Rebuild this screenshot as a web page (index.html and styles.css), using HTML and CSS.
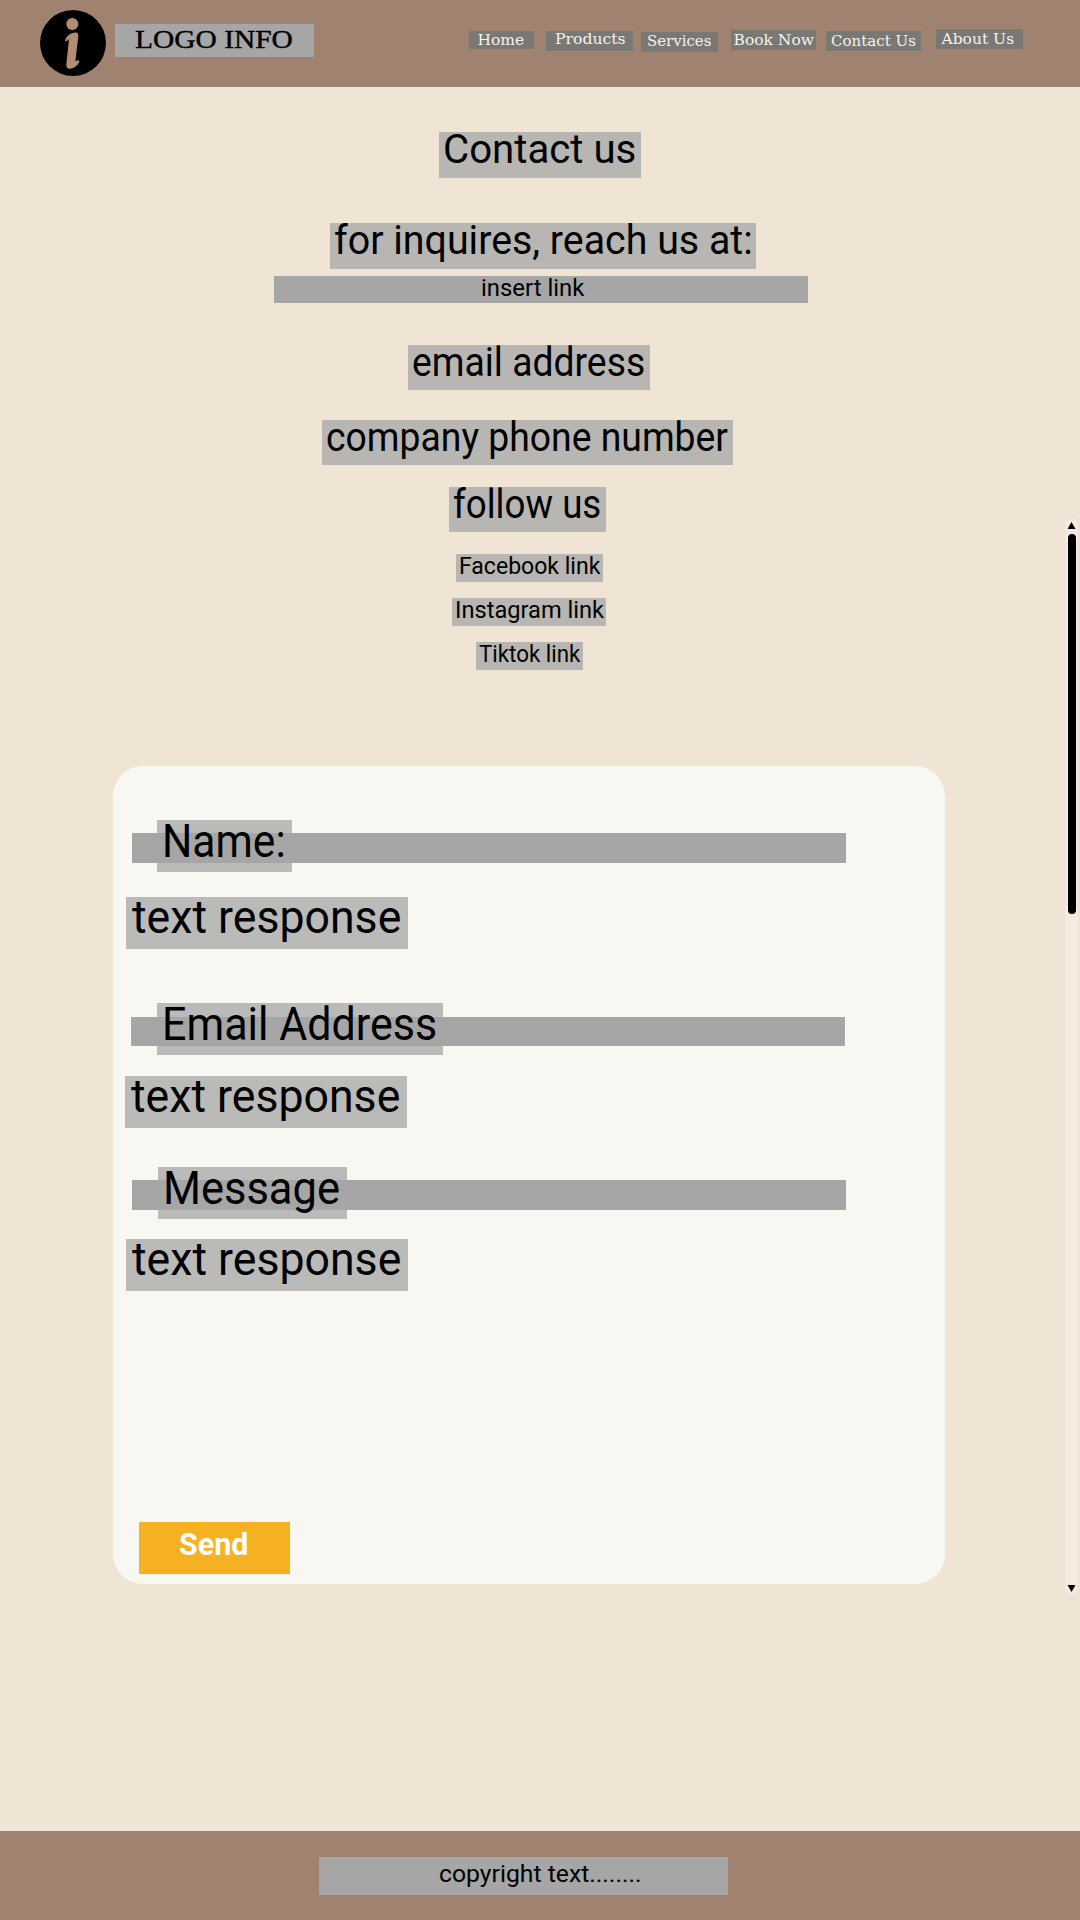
FILE: index.html
```html
<!DOCTYPE html>
<html lang="en">
<head>
<meta charset="utf-8">
<title>Contact us</title>
<link rel="stylesheet" href="styles.css">
</head>
<body>
<header class="site-header">
  <svg class="logo" viewBox="0 0 66 66">
    <circle cx="33" cy="33" r="33"/>
    <circle class="cut" cx="32.3" cy="14" r="6"/>
    <path class="cut" d="M25 31C26 26 31 22.500 35.500 22.500C38 22.500 38.500 24 38.300 26.500L35.500 50C35.400 52 36.500 51 37.500 50.300L39.500 50.800C38.500 55 34 58.800 30 58.800C27 58.800 26 57 26.300 54L28.800 31C29 29 28 29.300 27.200 31Z"/>
  </svg>
  <div class="brand"><span>LOGO INFO</span></div>
  <nav class="nav">
    <a class="home"><span>Home</span></a>
    <a class="products"><span>Products</span></a>
    <a class="services"><span>Services</span></a>
    <a class="book"><span>Book Now</span></a>
    <a class="contact"><span>Contact Us</span></a>
    <a class="about"><span>About Us</span></a>
  </nav>
</header>
<main class="main">
  <section class="info">
    <h1 class="tag big title"><span>Contact us</span></h1>
    <p class="tag big inquiry"><span>for inquires, reach us at:</span></p>
    <p class="tag small link-bar"><span>insert link</span></p>
    <p class="tag big email"><span>email address</span></p>
    <p class="tag big phone"><span>company phone number</span></p>
    <p class="tag big follow"><span>follow us</span></p>
    <a class="tag small facebook"><span>Facebook link</span></a>
    <a class="tag small instagram"><span>Instagram link</span></a>
    <a class="tag small tiktok"><span>Tiktok link</span></a>
  </section>
  <form class="card">
    <div class="bar name-bar"><label class="label name"><span>Name:</span></label></div>
    <div class="response first"><span>text response</span></div>
    <div class="bar email-bar"><label class="label address"><span>Email Address</span></label></div>
    <div class="response second"><span>text response</span></div>
    <div class="bar message-bar"><label class="label message"><span>Message</span></label></div>
    <div class="response third"><span>text response</span></div>
    <div class="send"><span>Send</span></div>
  </form>
  <svg class="scrollbar" viewBox="0 0 13 1075">
    <rect class="track" width="13" height="1075" rx="6.500"/>
    <path d="M6.500 3L10.500 10H2.500Z"/>
    <rect x="3" y="15" width="8" height="380" rx="4"/>
    <path d="M2.500 1066H10.500L6.500 1073Z"/>
  </svg>
</main>
<footer class="footer"><div class="copyright"><span>copyright text........</span></div></footer>
</body>
</html>
```
FILE: styles.css
```css
* { box-sizing: border-box; }
body {
  margin: 0;
  width: 1080px;
  height: 1920px;
  display: flex;
  flex-direction: column;
  background: #f0e5d5;
  color: #000;
  font-family: Roboto, "Liberation Sans", sans-serif;
}
/* --fit condenses or widens a run of text horizontally */
span { display: inline-block; white-space: nowrap; transform-origin: left; transform: scaleX(var(--fit, 1)); }

.site-header { height: 87px; background: #9f8270; display: flex; align-items: flex-start; padding-left: 40px; }
.logo { width: 66px; height: 66px; margin-top: 9.5px; }
.cut { fill: #b28d74; }
.brand {
  --fit: 1.155;
  width: 199px; height: 33px; margin: 24px 0 0 9px; padding-left: 20px;
  background: #a6a6a6; font: 25.5px/32px "Liberation Serif", serif;
  -webkit-text-stroke: .4px #000;
}
.nav { display: flex; margin-left: 154.5px; color: #f5f1ea; font: 15.5px/21px "DejaVu Serif", serif; }
.nav a { background: #7a7875; height: 20px; padding-left: 6px; flex: none; }
.nav .home { width: 65px; height: 18px; margin: 31px 12px 0 0; padding-left: 9px; line-height: 18px; }
.nav .products { --fit: 1.01; width: 87px; margin: 31px 8px 0 0; padding-left: 9px; line-height: 17px; }
.nav .services { --fit: .965; width: 77px; margin: 32px 13px 0 0; line-height: 18px; }
.nav .book { width: 85px; margin: 30px 10px 0 0; padding-left: 3px; }
.nav .contact { --fit: .97; width: 95px; margin: 30.5px 15px 0 0; padding-left: 5px; }
.nav .about { width: 87px; margin-top: 29px; }

.main { height: 1744px; display: grid; grid-template: 678.5px 1065.5px / 1065px 13px; }
.info { display: flex; flex-direction: column; align-items: flex-start; padding-top: 45px; }
.tag { margin: 0; background: rgba(166, 166, 166, .75); font-weight: 400; }
.big { font-size: 41px; line-height: 35px; height: 45px; padding-left: 4px; }
.small { font-size: 24.5px; line-height: 23px; height: 28px; padding-left: 3px; }
.title { --fit: .98; width: 202px; height: 46px; margin-left: 439px; }
.inquiry { --fit: .96; width: 426px; height: 46px; margin: 45px 0 0 330px; }
.link-bar { --fit: .975; width: 533.5px; height: 26.5px; margin: 7px 0 0 274px; padding-left: 207px; background: #a6a6a6; }
.email { --fit: .91; width: 242px; margin: 42.5px 0 0 408px; }
.phone { --fit: .91; width: 411px; margin: 30px 0 0 322px; }
.follow { --fit: .895; width: 157px; margin: 22px 0 0 449px; }
.facebook { --fit: .94; width: 147px; margin: 22px 0 0 455.5px; }
.instagram { --fit: .965; width: 154px; margin: 16px 0 0 452px; }
.tiktok { --fit: .912; width: 107px; margin: 16px 0 0 475.5px; }

.card { width: 832px; height: 818.5px; margin-left: 113px; padding-top: 67.5px; border-radius: 30px; background: #f8f7f2; }
.bar { display: flex; width: 713.5px; height: 30px; margin-left: 19px; background: #a6a6a6; }
.label, .response { flex: none; height: 52px; background: rgba(166, 166, 166, .75); font-size: 46px; line-height: 42px; }
.label { margin: -13px 0 0 25px; padding-left: 5px; }
.response { --fit: .97; width: 282px; margin-left: 13px; padding-left: 6px; line-height: 41px; }
.name { --fit: .925; width: 134.5px; }
.first { margin-top: 34px; }
.email-bar { height: 29px; margin: 68px 0 0 18px; }
.address { --fit: .935; width: 286px; margin: -14px 0 0 26px; }
.second { margin: 30px 0 0 11.5px; }
.message-bar { margin-top: 51.5px; }
.message { --fit: .945; width: 189px; margin-left: 26px; }
.third { margin-top: 29.5px; }
.send { --fit: .965; width: 151px; height: 52px; margin: 230.5px 0 0 26px; padding-left: 40px; background: #f6b223; color: #fff; font-size: 31.5px; font-weight: 700; line-height: 45px; }

.scrollbar { grid-column: 2; grid-row: 1 / 3; width: 13px; height: 1075px; margin-top: 432px; }
.track { fill: #f5ece1; }

.footer { height: 89px; padding: 26px 0 0 319px; background: #9f8270; }
.copyright { --fit: 1.01; width: 409px; height: 38px; padding-left: 120px; background: #a6a6a6; font-size: 24.5px; line-height: 33px; }
```
